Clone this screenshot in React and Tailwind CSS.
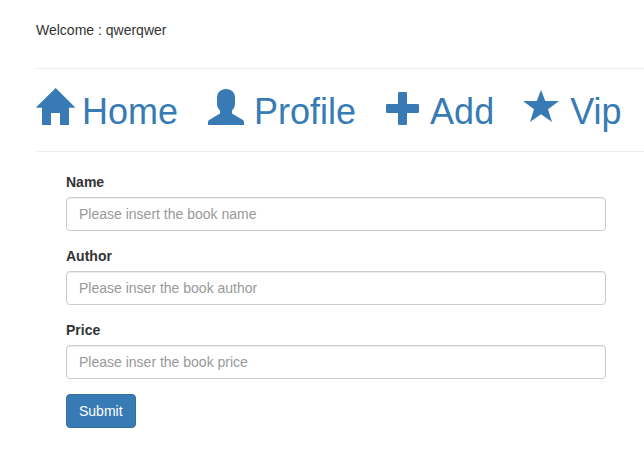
const glyphs = {
  home: "M19.7 -1 L38.8 18 V18.7 H33 V36 H24 V24 H15 V36 H6 V18.7 H0.4 V18 Z",
  user: "M18 0 C23.5 0 27 3.5 27 9 V15 C27 18 25.5 20 24 21.5 V24.5 L34.5 30.8 Q36 31.6 36 33 V36 H0 V33 Q0 31.6 1.5 30.8 L12 24.5 V21.5 C10.5 20 9 18 9 15 V9 C9 3.5 12.5 0 18 0 Z",
  plus: "M13.3 3 H19.7 Q21 3 21 4.3 V15 H31.7 Q33 15 33 16.3 V22.7 Q33 24 31.7 24 H21 V34.7 Q21 36 19.7 36 H13.3 Q12 36 12 34.7 V24 H1.3 Q0 24 0 22.7 V16.3 Q0 15 1.3 15 H12 V4.3 Q12 3 13.3 3 Z",
  star: "M17 1 L21.3 12 H35 L24 20.2 L28 33 L17 25.2 L6 33 L10 20.2 L-1 12 H12.7 Z",
};

function NavLink({ icon, label }) {
  return (
    <a className="whitespace-nowrap">
      <svg className="inline-block h-9 w-9 overflow-visible align-[-1px]" viewBox="0 0 36 36" fill="currentColor">
        <path d={glyphs[icon]} />
      </svg>
      {" " + label}
    </a>
  );
}

function Field({ label, placeholder }) {
  return (
    <div className="mb-[15px]">
      <label className="mb-[5px] block font-bold">{label}</label>
      <input
        className="block h-[34px] w-full rounded border border-[#ccc] bg-white px-3 py-1.5 shadow-[inset_0_1px_1px_rgba(0,0,0,0.075)] placeholder:text-[#999]"
        placeholder={placeholder}
      />
    </div>
  );
}

export default function App() {
  return (
    <div className="h-[467px] overflow-hidden bg-white pl-9 pt-5 font-['Liberation_Sans',Arial,sans-serif] text-sm leading-5 text-[#333]">
      <p className="mb-7">Welcome : qwerqwer</p>
      <nav className="flex h-[84px] items-center gap-[30px] border-y border-[#eee] text-4xl leading-[40px] text-[#387bb4]">
        <NavLink icon="home" label="Home" />
        <NavLink icon="user" label="Profile" />
        <NavLink icon="plus" label="Add" />
        <NavLink icon="star" label="Vip" />
      </nav>
      <form className="ml-[30px] mt-5 w-[540px]">
        <Field label="Name" placeholder="Please insert the book name" />
        <Field label="Author" placeholder="Please inser the book author" />
        <Field label="Price" placeholder="Please inser the book price" />
        <button type="button" className="h-[34px] rounded border border-[#336fa5] bg-[#387bb4] px-3 text-white">
          Submit
        </button>
      </form>
    </div>
  );
}
